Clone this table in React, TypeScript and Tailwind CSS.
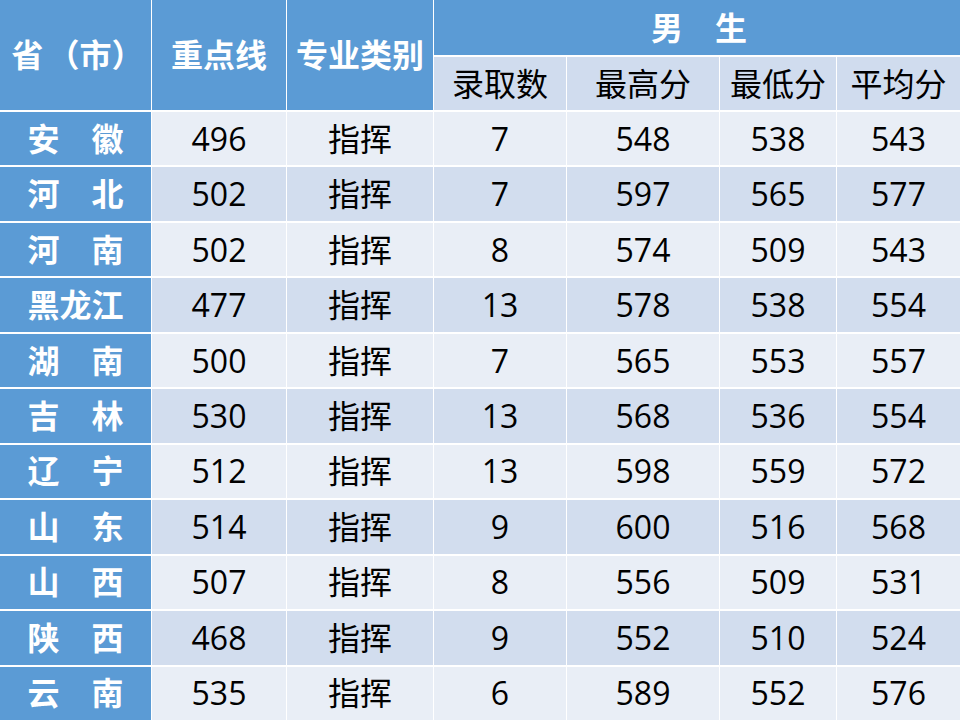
const rows: [string, number, number, number, number, number][] = [
  ['安　徽', 496, 7, 548, 538, 543],
  ['河　北', 502, 7, 597, 565, 577],
  ['河　南', 502, 8, 574, 509, 543],
  ['黑龙江', 477, 13, 578, 538, 554],
  ['湖　南', 500, 7, 565, 553, 557],
  ['吉　林', 530, 13, 568, 536, 554],
  ['辽　宁', 512, 13, 598, 559, 572],
  ['山　东', 514, 9, 600, 516, 568],
  ['山　西', 507, 8, 556, 509, 531],
  ['陕　西', 468, 9, 552, 510, 524],
  ['云　南', 535, 6, 589, 552, 576],
]

const font = { fontFamily: '"Open Sans", "Noto Sans CJK SC", sans-serif' }

export default function App() {
  return (
    <div
      className="grid h-[720px] w-[960px] grid-cols-[151px_134px_146px_132px_152px_116px_1fr] grid-rows-[55px_53px_repeat(11,minmax(0,1fr))] gap-x-px gap-y-[2px] bg-white text-[32px] leading-none text-black"
      style={font}
    >
      <div className="row-span-2 flex items-center justify-center bg-[#5b9bd5] pl-1 font-bold text-white">
        <span>省</span>
        <span className="ml-[4px]">（市）</span>
      </div>
      <div className="row-span-2 flex items-center justify-center bg-[#5b9bd5] font-bold text-white">
        重点线
      </div>
      <div className="row-span-2 flex items-center justify-center bg-[#5b9bd5] font-bold text-white">
        专业类别
      </div>
      <div className="col-span-4 flex items-center justify-center bg-[#5b9bd5] pl-1 font-bold text-white">
        男　生
      </div>
      {['录取数', '最高分', '最低分', '平均分'].map((h) => (
        <div key={h} className="flex items-center justify-center bg-[#d0dcee]">
          {h}
        </div>
      ))}
      {rows.map((r, i) => {
        const bg = i % 2 === 0 ? 'bg-[#e9eef6]' : 'bg-[#d2ddee]'
        return [
          <div
            key={`${i}-p`}
            className="flex items-center justify-center bg-[#5b9bd5] font-bold text-white"
          >
            {r[0]}
          </div>,
          <div key={`${i}-a`} className={`flex items-center justify-center ${bg}`}>
            {r[1]}
          </div>,
          <div key={`${i}-b`} className={`flex items-center justify-center ${bg}`}>
            指挥
          </div>,
          ...r.slice(2).map((v, j) => (
            <div key={`${i}-${j}`} className={`flex items-center justify-center ${bg}`}>
              {v}
            </div>
          )),
        ]
      })}
    </div>
  )
}
